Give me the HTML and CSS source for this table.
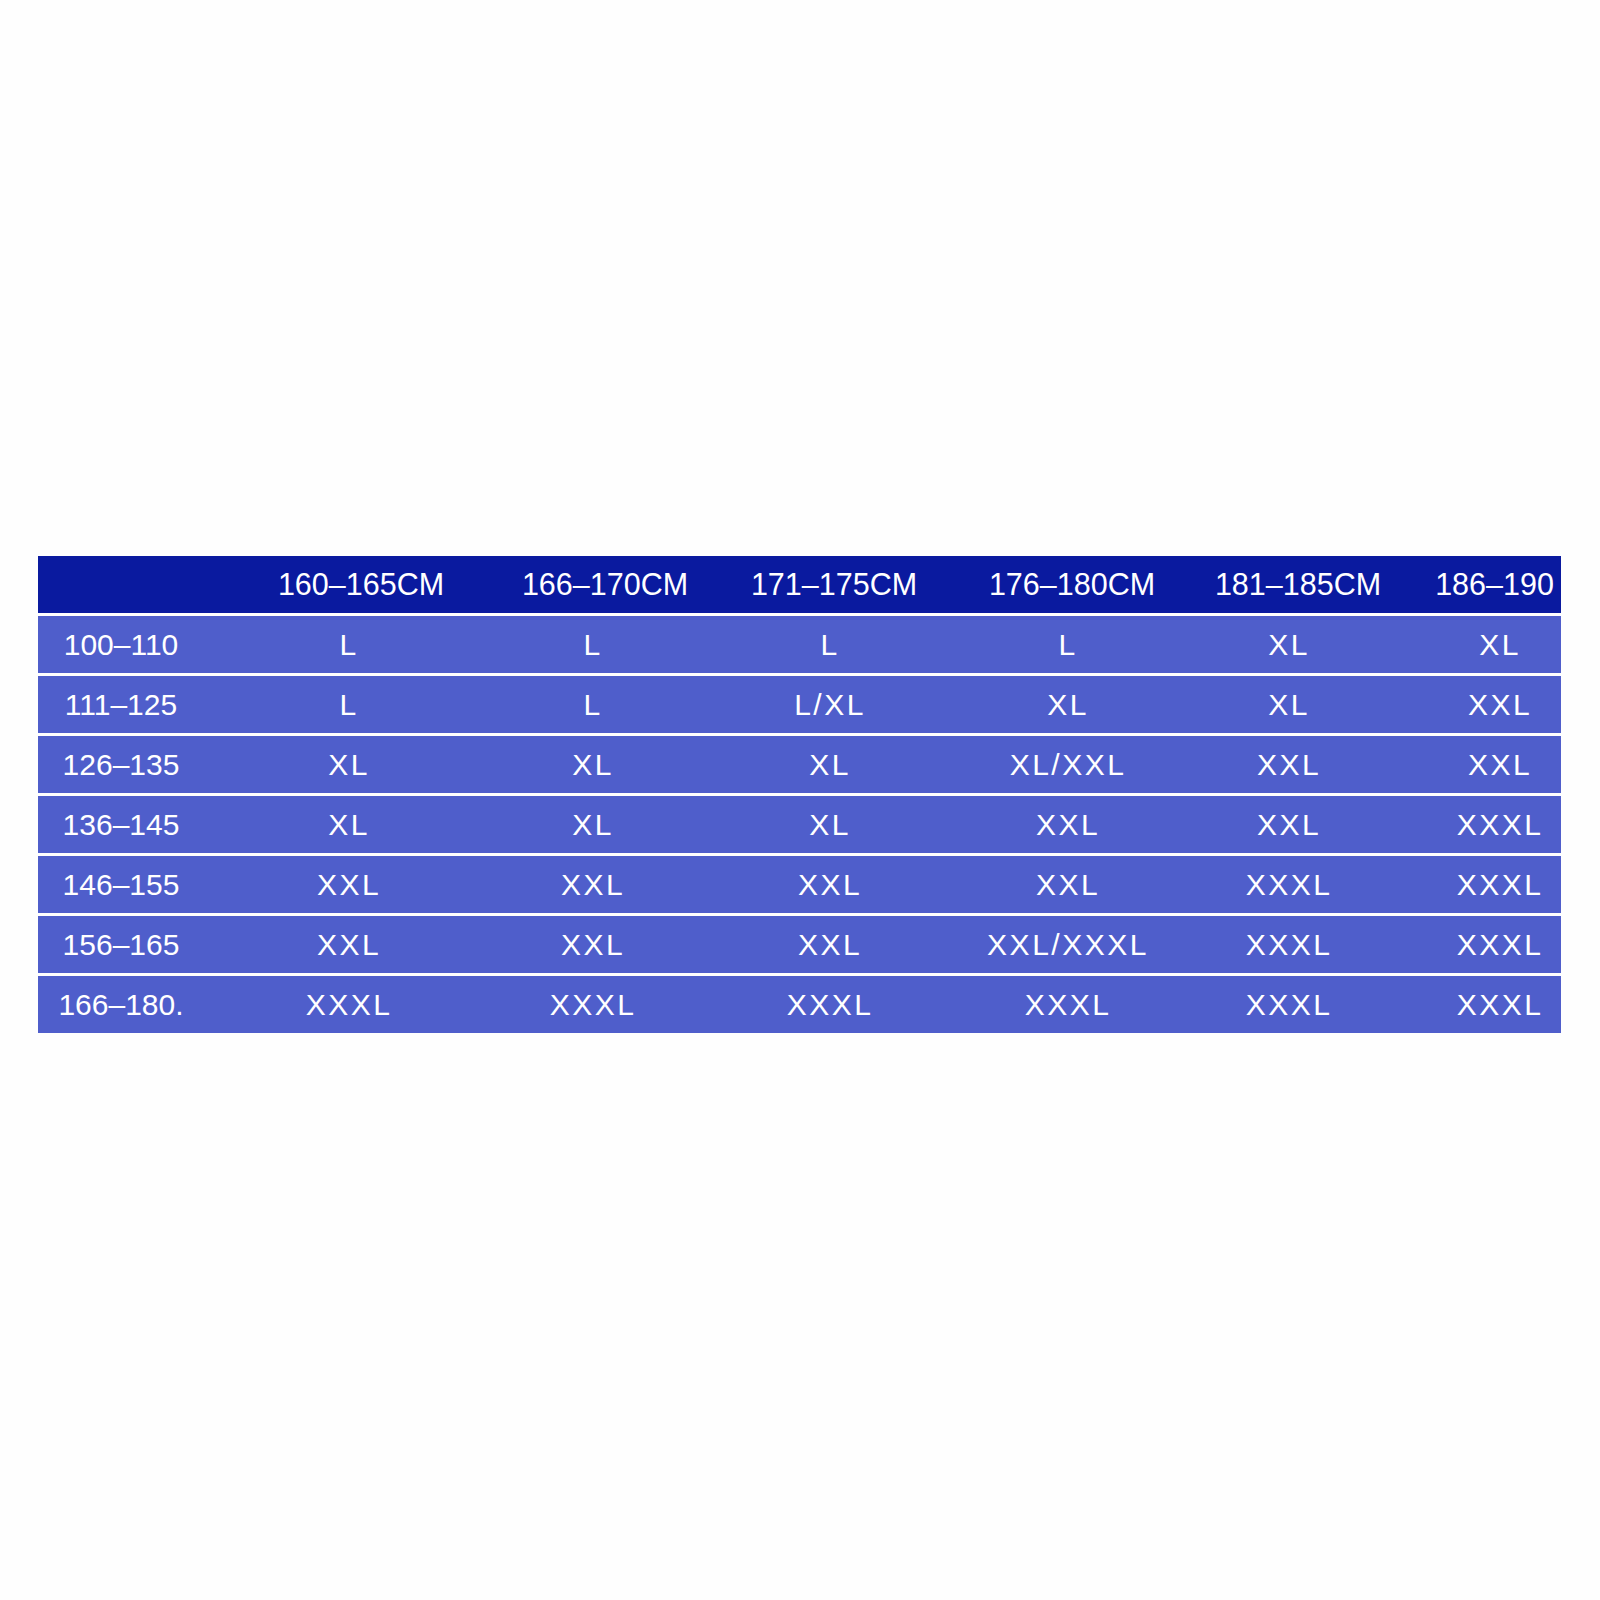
FILE: index.html
```html
<!DOCTYPE html>
<html>
<head>
<meta charset="utf-8">
<link rel="stylesheet" href="styles.css">
</head>
<body>
<div class="chart">
  <div class="row head">
    <div class="cell"></div>
    <div class="cell">160–165CM</div>
    <div class="cell">166–170CM</div>
    <div class="cell">171–175CM</div>
    <div class="cell">176–180CM</div>
    <div class="cell">181–185CM</div>
    <div class="cell">186–190</div>
  </div>
  <div class="row body">
    <div class="cell label">100–110</div>
    <div class="cell">L</div><div class="cell">L</div><div class="cell">L</div><div class="cell">L</div><div class="cell">XL</div><div class="cell last">XL</div>
  </div>
  <div class="row body">
    <div class="cell label">111–125</div>
    <div class="cell">L</div><div class="cell">L</div><div class="cell">L/XL</div><div class="cell">XL</div><div class="cell">XL</div><div class="cell last">XXL</div>
  </div>
  <div class="row body">
    <div class="cell label">126–135</div>
    <div class="cell">XL</div><div class="cell">XL</div><div class="cell">XL</div><div class="cell">XL/XXL</div><div class="cell">XXL</div><div class="cell last">XXL</div>
  </div>
  <div class="row body">
    <div class="cell label">136–145</div>
    <div class="cell">XL</div><div class="cell">XL</div><div class="cell">XL</div><div class="cell">XXL</div><div class="cell">XXL</div><div class="cell last">XXXL</div>
  </div>
  <div class="row body">
    <div class="cell label">146–155</div>
    <div class="cell">XXL</div><div class="cell">XXL</div><div class="cell">XXL</div><div class="cell">XXL</div><div class="cell">XXXL</div><div class="cell last">XXXL</div>
  </div>
  <div class="row body">
    <div class="cell label">156–165</div>
    <div class="cell">XXL</div><div class="cell">XXL</div><div class="cell">XXL</div><div class="cell">XXL/XXXL</div><div class="cell">XXXL</div><div class="cell last">XXXL</div>
  </div>
  <div class="row body">
    <div class="cell label">166–180.</div>
    <div class="cell">XXXL</div><div class="cell">XXXL</div><div class="cell">XXXL</div><div class="cell">XXXL</div><div class="cell">XXXL</div><div class="cell last">XXXL</div>
  </div>
</div>
</body>
</html>
```
FILE: styles.css
```css
html, body {
  margin: 0;
  padding: 0;
  background: #fefefe;
}
body {
  width: 1600px;
  height: 1600px;
  font-family: "Liberation Sans", Arial, Helvetica, sans-serif;
}
.chart {
  margin-top: 556px;
  margin-left: 38px;
  width: 1523px;
  display: flex;
  flex-direction: column;
  gap: 3px;
  background: #fefefe;
}
.row {
  display: grid;
  height: 57px;
  align-items: center;
  color: #ffffff;
  font-size: 30px;
}
.head {
  background: #0a1a9f;
  grid-template-columns: 166px 314px 174px 284px 192px 260px 133px;
  font-size: 30.5px;
}
.body {
  background: #4f5ecb;
  grid-template-columns: 166px 290px 198px 276px 200px 242px 151px;
}
.cell {
  text-align: center;
  white-space: nowrap;
  line-height: 57px;
}
.body .cell {
  letter-spacing: 2.5px;
}
.body .cell.label {
  letter-spacing: 0;
}
.body .cell.last {
  padding-left: 29px;
}
```
